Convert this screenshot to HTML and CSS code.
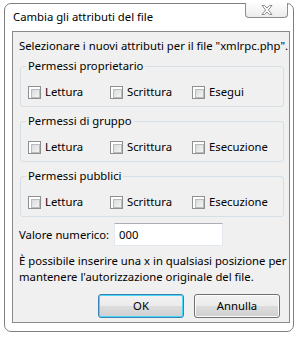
FILE: index.html
```html
<!DOCTYPE html>
<html lang="it">

<head>
    <meta charset="UTF-8">
    <title>Cambia gli attributi del file</title>
    <link rel="stylesheet" href="styles.css">
</head>

<body>
    <div class="window">
        <div class="titlebar">
            <span class="title">Cambia gli attributi del file</span>
            <div class="close-btn">
                <svg width="12" height="10" viewBox="0 0 12 10">
                    <path d="M1 0.5h2.6l2.4 2.6 2.4-2.6h2.6l-3.6 4.5 3.6 4.5h-2.6l-2.4-2.6-2.4 2.6h-2.6l3.6-4.5z"
                        fill="#fff" stroke="#8d8d8d" stroke-width="1" stroke-linejoin="round" />
                </svg>
            </div>
        </div>

        <div class="client">
            <p class="intro">Selezionare i nuovi attributi per il file "xmlrpc.php".</p>

            <fieldset class="group">
                <legend>Permessi proprietario</legend>
                <div class="checks">
                    <label class="check"><span class="box"></span>Lettura</label>
                    <label class="check"><span class="box"></span>Scrittura</label>
                    <label class="check"><span class="box"></span>Esegui</label>
                </div>
            </fieldset>

            <fieldset class="group">
                <legend>Permessi di gruppo</legend>
                <div class="checks">
                    <label class="check"><span class="box"></span>Lettura</label>
                    <label class="check"><span class="box"></span>Scrittura</label>
                    <label class="check"><span class="box"></span>Esecuzione</label>
                </div>
            </fieldset>

            <fieldset class="group">
                <legend>Permessi pubblici</legend>
                <div class="checks">
                    <label class="check"><span class="box"></span>Lettura</label>
                    <label class="check"><span class="box"></span>Scrittura</label>
                    <label class="check"><span class="box"></span>Esecuzione</label>
                </div>
            </fieldset>

            <div class="numeric">
                <span class="num-label">Valore numerico:</span>
                <div class="num-input">000</div>
            </div>

            <p class="hint">È possibile inserire una x in qualsiasi posizione per<br>
                mantenere l'autorizzazione originale del file.</p>

            <div class="buttons">
                <div class="btn btn-default">OK</div>
                <div class="btn">Annulla</div>
            </div>
        </div>
    </div>
</body>

</html>
```

FILE: styles.css
```css
* {
    margin: 0;
    padding: 0;
    box-sizing: border-box;
}

body {
    font-family: 'Noto Sans', sans-serif;
    font-size: 11.3px;
    color: #000;
    background: #fff;
}

.window {
    margin: 3px 0 0 4px;
    width: 290px;
    height: 329px;
    border: 1px solid #7f7f7f;
    border-radius: 7px;
    background: #fff;
    display: flex;
    flex-direction: column;
}

/* Title bar */
.titlebar {
    height: 27px;
    display: flex;
    justify-content: space-between;
    align-items: flex-start;
    padding-left: 8px;
}

.title {
    margin-top: 5px;
    line-height: 16px;
}

.close-btn {
    width: 43px;
    height: 15px;
    margin-right: 5px;
    margin-top: -1px;
    border: 1px solid #8c8c8c;
    border-top: none;
    border-radius: 0 0 4px 4px;
    background: linear-gradient(#fdfdfd, #ececec);
    display: flex;
    justify-content: center;
    align-items: center;
}

/* Client area */
.client {
    margin: 0 3px 8px 7px;
    flex: 1;
    border: 1px solid #898989;
    background: #f0f0f0;
    padding: 6px 5px 0 6px;
}

.intro {
    line-height: 16px;
    white-space: nowrap;
}

.group {
    margin: 5px 0 0 1px;
    border: 1px solid #d5dfe5;
    border-radius: 3px;
    height: 48px;
    padding: 0 0 0 5px;
}

.group + .group {
    margin-top: 7px;
}

.group legend {
    padding: 0 2px;
    line-height: 14px;
}

.checks {
    display: grid;
    grid-template-columns: 82px 82px 82px;
    margin: 11px 0 0 2px;
}

.check {
    display: flex;
    align-items: center;
    gap: 4px;
    line-height: 16px;
}

.box {
    width: 13px;
    height: 13px;
    border: 1px solid #8e8f8f;
    background: #fff;
    position: relative;
}

.box::after {
    content: "";
    position: absolute;
    left: 2px;
    top: 2px;
    width: 7px;
    height: 7px;
    border: 1px solid #b8bcc0;
    background: linear-gradient(135deg, #d8dadc, #f4f4f4);
}

/* Numeric value */
.numeric {
    display: flex;
    align-items: center;
    margin-top: 6px;
}

.num-label {
    width: 95px;
    line-height: 16px;
}

.num-input {
    width: 109px;
    height: 23px;
    background: #fff;
    border: 1px solid #e3e9ef;
    border-top-color: #abadb3;
    padding: 3px 0 0 4px;
    line-height: 16px;
}

.hint {
    margin-top: 7px;
    line-height: 16px;
    white-space: nowrap;
}

/* Buttons */
.buttons {
    display: flex;
    justify-content: flex-end;
    gap: 10px;
    margin-top: 9px;
    padding-right: 4px;
}

.btn {
    width: 86px;
    height: 24px;
    border: 1px solid #707070;
    border-radius: 3px;
    background: linear-gradient(#f2f2f2 0%, #ebebeb 50%, #dddddd 51%, #cfcfcf 100%);
    box-shadow: inset 0 0 0 1px #fcfcfc;
    text-align: center;
    line-height: 21px;
}

.btn-default {
    border-color: #3c7fb1;
    box-shadow: inset 0 0 0 1px #48d8fb;
}
```
